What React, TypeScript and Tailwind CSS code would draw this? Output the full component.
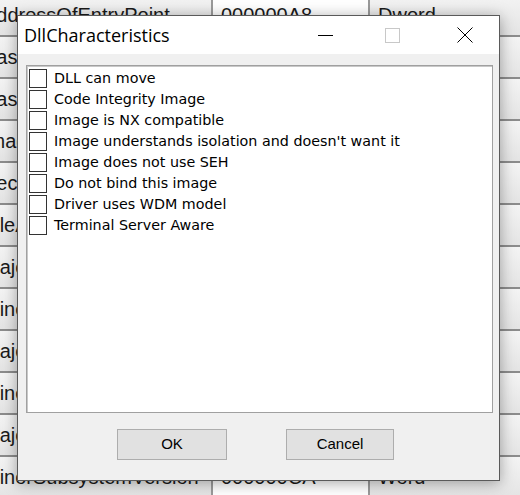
import React from "react";

const rows = [
  ["AddressOfEntryPoint", "000000A8", "Dword"],
  ["BaseOfCode", "00001000", "Dword"],
  ["BaseOfData", "00002000", "Dword"],
  ["ImageBase", "00400000", "Dword"],
  ["SectionAlignment", "00001000", "Dword"],
  ["FileAlignment", "00000200", "Dword"],
  ["MajorOperatingSystemVersion", "000000C0", "Word"],
  ["MinorOperatingSystemVersion", "000000C2", "Word"],
  ["MajorImageVersion", "000000C4", "Word"],
  ["MinorImageVersion", "000000C6", "Word"],
  ["MajorSubsystemVersion", "000000C8", "Word"],
  ["MinorSubsystemVersion", "000000CA", "Word"],
];

const flags = [
  "DLL can move",
  "Code Integrity Image",
  "Image is NX compatible",
  "Image understands isolation and doesn't want it",
  "Image does not use SEH",
  "Do not bind this image",
  "Driver uses WDM model",
  "Terminal Server Aware",
];

function TableBg() {
  return (
    <div className="ml-[-17px] mt-[-5px] flex flex-col font-['Liberation_Sans',sans-serif] text-[20px] text-[#1a1a1a]">
      {rows.map((r) => (
        <div key={r[0]} className="flex h-[42px] border-b-2 border-[#8c8c8c]">
          <div className="flex w-[230px] items-center bg-gradient-to-b from-[#f4f4f4] to-[#e4e4e4] border-r-2 border-[#9a9a9a] whitespace-nowrap overflow-hidden">
            {r[0]}
          </div>
          <div className="flex w-[157px] items-center pl-[8px] bg-white border-r-2 border-[#9a9a9a]">
            {r[1]}
          </div>
          <div className="flex flex-1 items-center pl-[8px] bg-gradient-to-b from-[#f4f4f4] to-[#e4e4e4]">
            {r[2]}
          </div>
        </div>
      ))}
    </div>
  );
}

function Checkbox({ label }: { label: string }) {
  return (
    <label className="flex h-[21px] items-center">
      <span className="ml-[1px] h-[19px] w-[18px] border border-[#333] bg-white" />
      <span className="ml-[7px] whitespace-nowrap font-['DejaVu_Sans',sans-serif] text-[14.3px] leading-none text-black">
        {label}
      </span>
    </label>
  );
}

export default function App() {
  return (
    <div className="relative h-[495px] w-[520px] overflow-hidden bg-white">
      <TableBg />
      <div className="absolute left-[17px] top-[15px] flex h-[466px] w-[483px] flex-col border border-[#5a5a5a] bg-[#f0f0f0] font-['Liberation_Sans',sans-serif] shadow-[0_2px_14px_rgba(0,0,0,0.35)]">
        <div className="flex h-[38px] items-center bg-white">
          <span className="ml-[6px] font-['Open_Sans',sans-serif] text-[18px] text-black">DllCharacteristics</span>
          <div className="ml-auto flex items-center">
            <div className="flex w-[46px] justify-center">
              <div className="h-[1px] w-[15px] bg-black" />
            </div>
            <div className="ml-[21px] flex w-[46px] justify-center">
              <div className="h-[15px] w-[15px] border border-[#c8c8c8]" />
            </div>
            <div className="ml-[27px] mr-[11px] flex w-[46px] justify-center">
              <svg width="16" height="16" viewBox="0 0 16 16">
                <path d="M0.5 0.5L15.5 15.5M15.5 0.5L0.5 15.5" stroke="#000" strokeWidth="1" />
              </svg>
            </div>
          </div>
        </div>
        <div className="ml-[8px] mr-[6px] mt-[11px] h-[348px] border border-[#a0a0a0] bg-white shadow-[inset_1px_1px_0_#c8c8c8]">
          <div className="flex flex-col pl-[1px] pt-[2px]">
            {flags.map((f) => (
              <Checkbox key={f} label={f} />
            ))}
          </div>
        </div>
        <div className="mt-[16px] flex">
          <button className="ml-[99px] h-[31px] w-[110px] border border-[#adadad] bg-[#e1e1e1] text-[15px] text-black">
            OK
          </button>
          <button className="ml-[59px] h-[31px] w-[108px] border border-[#adadad] bg-[#e1e1e1] text-[15px] text-black">
            Cancel
          </button>
        </div>
      </div>
    </div>
  );
}
